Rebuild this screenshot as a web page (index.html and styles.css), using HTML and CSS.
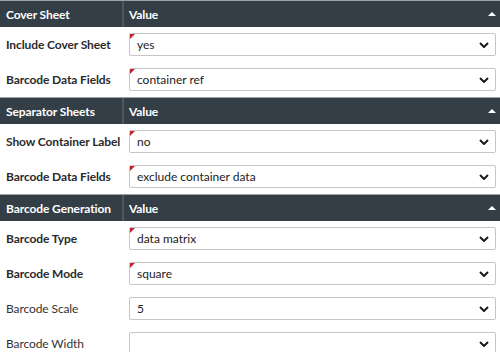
FILE: index.html
```html
<!DOCTYPE html>
<html>
<head>
<meta charset="utf-8">
<link rel="stylesheet" href="styles.css">
</head>
<body>
<div class="grid">
  <div class="section">
    <div class="head">
      <div class="hcell name">Cover Sheet</div>
      <div class="hcell val">Value<span class="caret"></span></div>
    </div>
    <div class="row">
      <div class="label strong">Include Cover Sheet</div>
      <div class="field"><div class="select changed">yes<svg class="chev" viewBox="0 0 10 6"><polyline points="1,1 5,5 9,1"/></svg></div></div>
    </div>
    <div class="row">
      <div class="label strong">Barcode Data Fields</div>
      <div class="field"><div class="select changed">container ref<svg class="chev" viewBox="0 0 10 6"><polyline points="1,1 5,5 9,1"/></svg></div></div>
    </div>
  </div>
  <div class="section">
    <div class="head">
      <div class="hcell name">Separator Sheets</div>
      <div class="hcell val">Value<span class="caret"></span></div>
    </div>
    <div class="row">
      <div class="label strong">Show Container Label</div>
      <div class="field"><div class="select changed">no<svg class="chev" viewBox="0 0 10 6"><polyline points="1,1 5,5 9,1"/></svg></div></div>
    </div>
    <div class="row">
      <div class="label strong">Barcode Data Fields</div>
      <div class="field"><div class="select changed">exclude container data<svg class="chev" viewBox="0 0 10 6"><polyline points="1,1 5,5 9,1"/></svg></div></div>
    </div>
  </div>
  <div class="section">
    <div class="head">
      <div class="hcell name">Barcode Generation</div>
      <div class="hcell val">Value<span class="caret"></span></div>
    </div>
    <div class="row">
      <div class="label strong">Barcode Type</div>
      <div class="field"><div class="select changed">data matrix<svg class="chev" viewBox="0 0 10 6"><polyline points="1,1 5,5 9,1"/></svg></div></div>
    </div>
    <div class="row">
      <div class="label strong">Barcode Mode</div>
      <div class="field"><div class="select changed">square<svg class="chev" viewBox="0 0 10 6"><polyline points="1,1 5,5 9,1"/></svg></div></div>
    </div>
    <div class="row">
      <div class="label">Barcode Scale</div>
      <div class="field"><div class="select">5<svg class="chev" viewBox="0 0 10 6"><polyline points="1,1 5,5 9,1"/></svg></div></div>
    </div>
    <div class="row">
      <div class="label">Barcode Width</div>
      <div class="field"><div class="select"><svg class="chev" viewBox="0 0 10 6"><polyline points="1,1 5,5 9,1"/></svg></div></div>
    </div>
  </div>
</div>
</body>
</html>
```

FILE: styles.css
```css
html, body {
  margin: 0;
  padding: 0;
  background: #ffffff;
}
body {
  font-family: Lato, "Liberation Sans", sans-serif;
  font-size: 12px;
  color: #333333;
  width: 500px;
  overflow: hidden;
}
.grid {
  display: flex;
  flex-direction: column;
}
.head {
  display: grid;
  grid-template-columns: 122px 1fr;
  height: 26px;
  background: #343e47;
  border-top: 1px solid #9aa0a4;
  color: #ffffff;
  font-weight: 700;
}
.hcell {
  display: flex;
  align-items: center;
  padding-left: 6px;
  white-space: nowrap;
  letter-spacing: -0.1px;
}
.hcell.val {
  border-left: 2px solid #4e5861;
  position: relative;
  padding-left: 5px;
}
.caret {
  position: absolute;
  right: 4px;
  top: 11px;
  width: 0;
  height: 0;
  border-left: 4px solid transparent;
  border-right: 4px solid transparent;
  border-bottom: 4px solid #ffffff;
}
.row {
  display: grid;
  grid-template-columns: 124px 1fr;
  height: 35px;
  align-items: center;
}
.label {
  padding-left: 6px;
  white-space: nowrap;
  letter-spacing: -0.1px;
}
.label.strong {
  font-weight: 700;
  color: #2b2b2b;
}
.field {
  padding: 0 4px 0 5px;
}
.select {
  position: relative;
  height: 21px;
  border: 1px solid #c6c6c6;
  border-radius: 2px;
  display: flex;
  align-items: center;
  padding-left: 7px;
  color: #222222;
}
.select.changed::before {
  content: "";
  position: absolute;
  left: 0;
  top: 0;
  width: 0;
  height: 0;
  border-top: 5px solid #c0272d;
  border-right: 5px solid transparent;
}
.chev {
  position: absolute;
  right: 6px;
  top: 8px;
  width: 10px;
  height: 6px;
  fill: none;
  stroke: #1a1a1a;
  stroke-width: 2;
}
```
